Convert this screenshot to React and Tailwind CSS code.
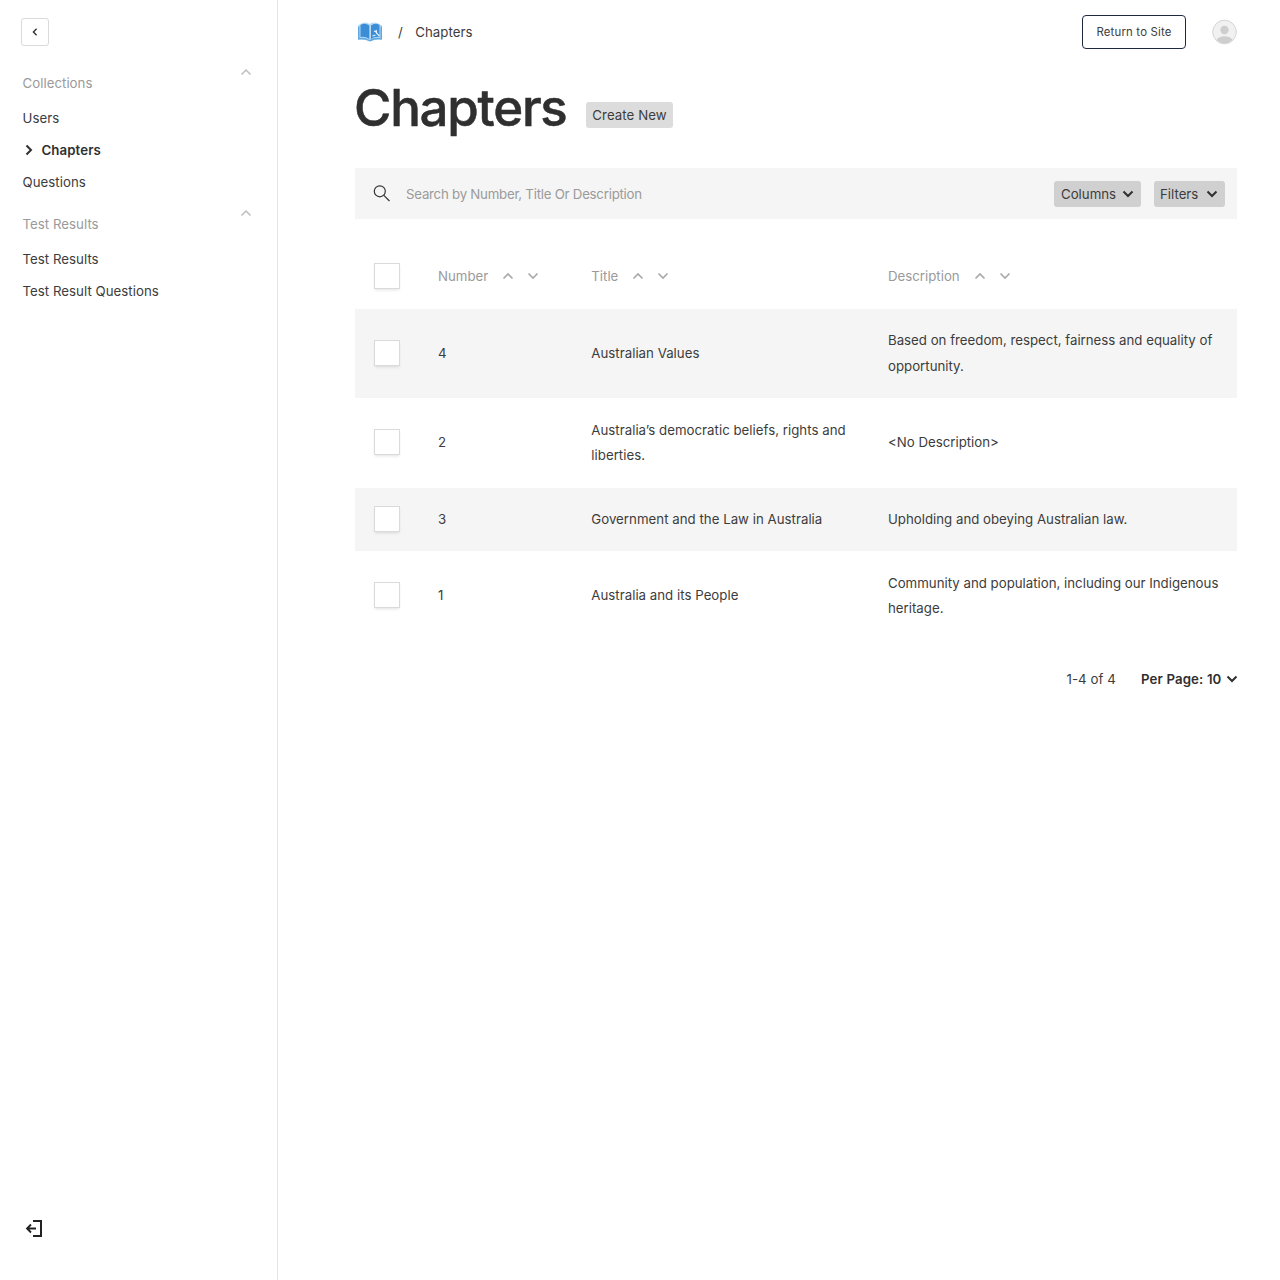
const Chevron = ({ dir = 'down', w = 10, color = '#2f2f2f', stroke = 2 }) => {
  const d = {
    down: 'M0.500 2.500 L5 7 L9.500 2.500',
    up: 'M0.500 7.500 L5 3 L9.500 7.500',
    left: 'M7 1 L3 5 L7 9',
    right: 'M2.500 0.500 L7 5 L2.500 9.500',
  }[dir];
  return (
    <svg width={w} height={w} viewBox="0 0 10 10" fill="none" stroke={color} strokeWidth={stroke} className="shrink-0 overflow-visible">
      <path d={d} />
    </svg>
  );
};

const Book = () => (
  <svg width="26" height="20" viewBox="0 0 26 20" className="shrink-0">
    <path d="M1 3.500 Q7 -1.500 12.500 2 Q18 -1.500 25 3.500 V18 Q18 17 13 19.500 Q8 17 1 18 Z" fill="#b9d9f3" />
    <path d="M1 4.500 H2.500 V16 Q8 15 12.500 18 Q17 15 23.500 16 V4.500 H25 V17.500 Q18 16.500 13 19.500 Q8 16.500 1 17.500 Z" fill="#5fa8e4" />
    <path d="M3.500 3 Q8 0.500 12.300 3.500 V17 Q8 14 3.500 15 Z" fill="#3b8dd6" />
    <path d="M14 3.500 Q18 0.500 22.500 3 V15 Q18 14 14 17 Z" fill="#3b8dd6" />
    <path d="M17 9 L19 10 M19 8 L19.800 11.500 L22.500 14 M15.500 14 L18.500 13" stroke="#e6f2fc" strokeWidth="1.300" fill="none" />
  </svg>
);

const Check = () => <div className="-mt-[2px] h-[26px] w-[26px] border border-[#dadada] bg-white shadow-[0_2px_3px_-1px_rgba(0,0,0,0.12)]" />;

const NavGroup = ({ label, children }) => (
  <section>
    <div className="flex h-[35px] items-start justify-between text-[#9a9a9a]">
      <span className="pt-[4px]">{label}</span>
      <Chevron dir="up" color="#bdbdbd" stroke={1.5} />
    </div>
    {children}
  </section>
);

const Heading = ({ children }) => (
  <div className="flex items-center text-[#9a9a9a]">
    <span className="mr-[15px]">{children}</span>
    <span className="-mt-[2px] flex gap-[15px]">
      <Chevron dir="up" color="#a8a8a8" stroke={1.6} />
      <Chevron dir="down" color="#a8a8a8" stroke={1.6} />
    </span>
  </div>
);

const rows = [
  ['4', 'Australian Values', 'Based on freedom, respect, fairness and equality of opportunity.', 'h-[89px] bg-[#f5f5f5]'],
  ['2', 'Australia’s democratic beliefs, rights and liberties.', '<No Description>', 'h-[90px]'],
  ['3', 'Government and the Law in Australia', 'Upholding and obeying Australian law.', 'h-[63px] bg-[#f5f5f5]'],
  ['1', 'Australia and its People', 'Community and population, including our Indigenous heritage.', 'h-[90px]'],
];
const cols = 'grid grid-cols-[64px_153.300px_296.700px_1fr] items-center pl-[19px]';

export default function App() {
  return (
    <div className="flex h-[1280px] w-[1280px] overflow-hidden bg-white font-['Inter',sans-serif] text-[13.26px] leading-[25.5px] text-[#3c3c3c]">
      <aside className="flex w-[278px] shrink-0 flex-col border-r border-[#e3e3e3] pt-[18px] pr-[26px] pb-[41px] pl-[21px]">
        <button className="flex h-[28px] w-[28px] items-center justify-center rounded-[3px] border border-[#dadada]">
          <Chevron dir="left" w={8} stroke={1.7} />
        </button>
        <nav className="flex flex-col pt-[21px] pl-[1.5px] tracking-[0.03px]">
          <NavGroup label="Collections">
            <div className="h-[32px] pt-[4px]">Users</div>
            <div className="flex h-[32.5px] items-center pt-px font-semibold tracking-[0.09px] text-[#2f2f2f]">
              <span className="mr-[8px] ml-px flex pb-[2px]"><Chevron dir="right" /></span>
              Chapters
            </div>
            <div className="h-[41.5px] pt-[3px]">Questions</div>
          </NavGroup>
          <NavGroup label="Test Results">
            <div className="h-[32px] pt-[4px]">Test Results</div>
            <div className="h-[32px] pt-[4px]">Test Result Questions</div>
          </NavGroup>
        </nav>
        <svg className="mt-auto ml-[4px]" width="18" height="20" viewBox="0 0 18 20" fill="none" stroke="#222" strokeWidth="2">
          <path d="M8 2 H16 V17 H8" />
          <path d="M2 9.500 H11 M6 5.500 L2 9.500 L6 13.500" strokeWidth="1.800" />
        </svg>
      </aside>
      <main className="flex w-[959px] flex-col pl-[77px]">
        <header className="flex h-[64px] items-center pl-[2px]">
          <Book />
          <span className="ml-[15px] pt-px">/</span>
          <span className="ml-[12.5px] pt-px tracking-[0.04px]">Chapters</span>
          <button className="mr-[26px] ml-auto h-[34px] w-[104px] rounded-[4px] border border-[#1e293f] text-[11.4px] tracking-[0.18px]">
            <span className="relative top-[0.5px]">Return to Site</span>
          </button>
          <svg width="25" height="26" viewBox="0 0 25 25">
            <circle cx="12.500" cy="12.500" r="11.800" fill="#f1f1f1" stroke="#d4d4d4" />
            <circle cx="12.500" cy="10.500" r="4.200" fill="#cecece" />
            <path d="M4.500 20.500 C7 15.500 18 15.500 20.500 20.500 Q12.500 27.500 4.500 20.500" fill="#cecece" />
          </svg>
        </header>
        <div className="flex h-[104px] items-start">
          <h1 className="mt-[17px] -ml-px w-[213px] text-[51px] leading-[54px] font-medium tracking-[-1.25px] text-[#2f2f2f] [-webkit-text-stroke:0.5px_#2f2f2f]">Chapters</h1>
          <button className="mt-[38px] ml-[19px] h-[26px] w-[87px] rounded-[3px] bg-[#dcdcdc] pt-px tracking-[0.06px]">Create New</button>
        </div>
        <div className="flex h-[51px] shrink-0 items-center bg-[#f5f5f5] pr-[12px] pl-[18px]">
          <svg width="18" height="18" viewBox="0 0 18 18" fill="none" stroke="#333" strokeWidth="1.200">
            <circle cx="6.800" cy="6.300" r="5.500" />
            <path d="M10.800 10.300 L16.500 16" />
          </svg>
          <span className="ml-[15px] pt-[2px] tracking-[-0.24px] text-[#9a9a9a]">Search by Number, Title Or Description</span>
          <button className="ml-auto flex h-[26px] w-[87px] items-center justify-between rounded-[3px] bg-[#d0d0d0] pr-[8px] pl-[7px]">
            <span className="pt-[2px]">Columns</span> <Chevron />
          </button>
          <button className="ml-[13px] flex h-[26px] w-[71px] items-center justify-between rounded-[3px] bg-[#d0d0d0] pr-[8px] pl-[6px]">
            <span className="pt-[2px]">Filters</span> <Chevron />
          </button>
        </div>
        <div className={`${cols} mt-[26px] h-[64px]`}>
          <Check />
          <Heading>Number</Heading>
          <Heading>Title</Heading>
          <Heading>Description</Heading>
        </div>
        {rows.map(([n, title, desc, cls]) => (
          <div key={n} className={`${cols} ${cls}`}>
            <Check />
            <span>{n}</span>
            <span className="pr-[38px] tracking-[0.02px]">{title}</span>
            <span className="pr-[15px]">{desc}</span>
          </div>
        ))}
        <footer className="mt-[26px] flex items-center justify-end">
          <span className="mr-[25px] tracking-[0.08px]">1-4 of 4</span>
          <span className="mr-[5px] font-semibold tracking-[0.13px] text-[#2f2f2f]">Per Page: 10</span>
          <span className="mr-[0.5px] flex pb-px"><Chevron /></span>
        </footer>
      </main>
    </div>
  );
}
